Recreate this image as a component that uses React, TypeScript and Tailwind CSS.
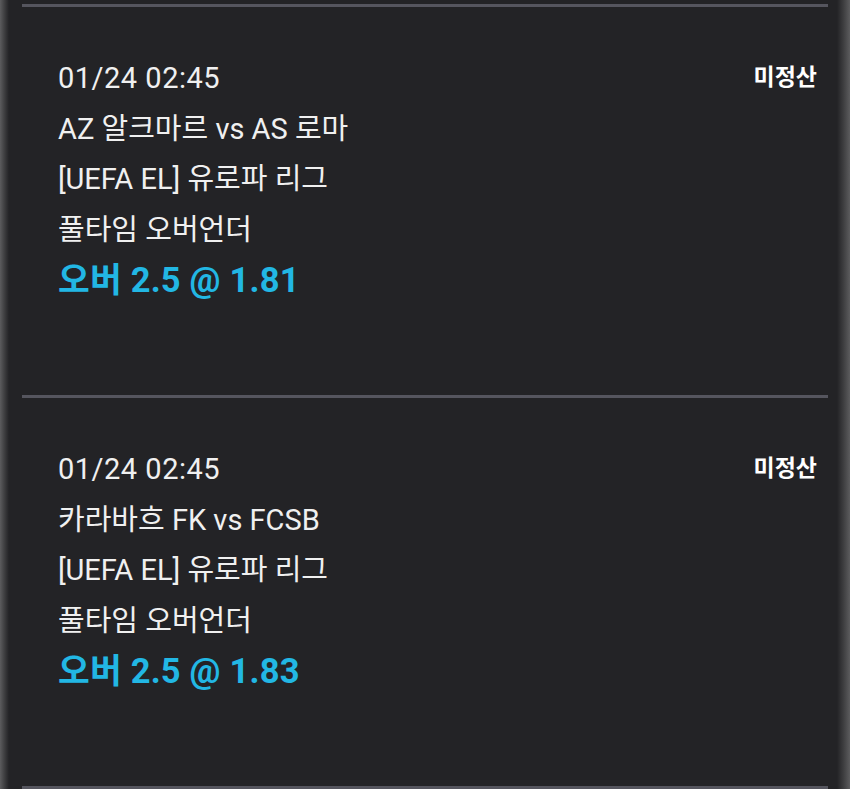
import React from "react";

const font = { fontFamily: 'Roboto, "Noto Sans CJK KR", sans-serif' };

function Card({ teams, odds }: { teams: string; odds: string }) {
  return (
    <div className="h-[391px] flex flex-col">
      <div className="h-[3px] bg-[#55555e] mx-[22px]" />
      <div className="flex flex-row pl-[58px] pr-[33px] pt-[46px]">
        <div className="flex flex-col flex-1 text-[#f0f0f0] text-[29px] leading-[50.5px]">
          <div className="tracking-[0.5px]">01/24 02:45</div>
          <div>{teams}</div>
          <div>[UEFA EL] 유로파 리그</div>
          <div>풀타임 오버언더</div>
          <div className="text-[#22b7e4] font-bold text-[34.5px] tracking-[0.2px]">{odds}</div>
        </div>
        <div className="text-white font-bold text-[23px] leading-[50px]">미정산</div>
      </div>
    </div>
  );
}

export default function App() {
  return (
    <div className="w-[850px] h-[789px] bg-[#232326] relative overflow-hidden" style={font}>
      <div className="absolute left-0 top-0 bottom-0 w-[9px] bg-gradient-to-r from-[#5c5c5e] via-[#3e3e40] to-[#232326]" />
      <div className="absolute right-0 top-0 bottom-0 w-[13px] bg-gradient-to-l from-[#5c5c5e] via-[#3e3e40] to-[#232326]" />
      <div className="relative flex flex-col pt-[4px]">
        <Card teams="AZ 알크마르 vs AS 로마" odds="오버 2.5 @ 1.81" />
        <Card teams="카라바흐 FK vs FCSB" odds="오버 2.5 @ 1.83" />
        <div className="h-[3px] bg-[#55555e] mx-[22px]" />
      </div>
    </div>
  );
}
